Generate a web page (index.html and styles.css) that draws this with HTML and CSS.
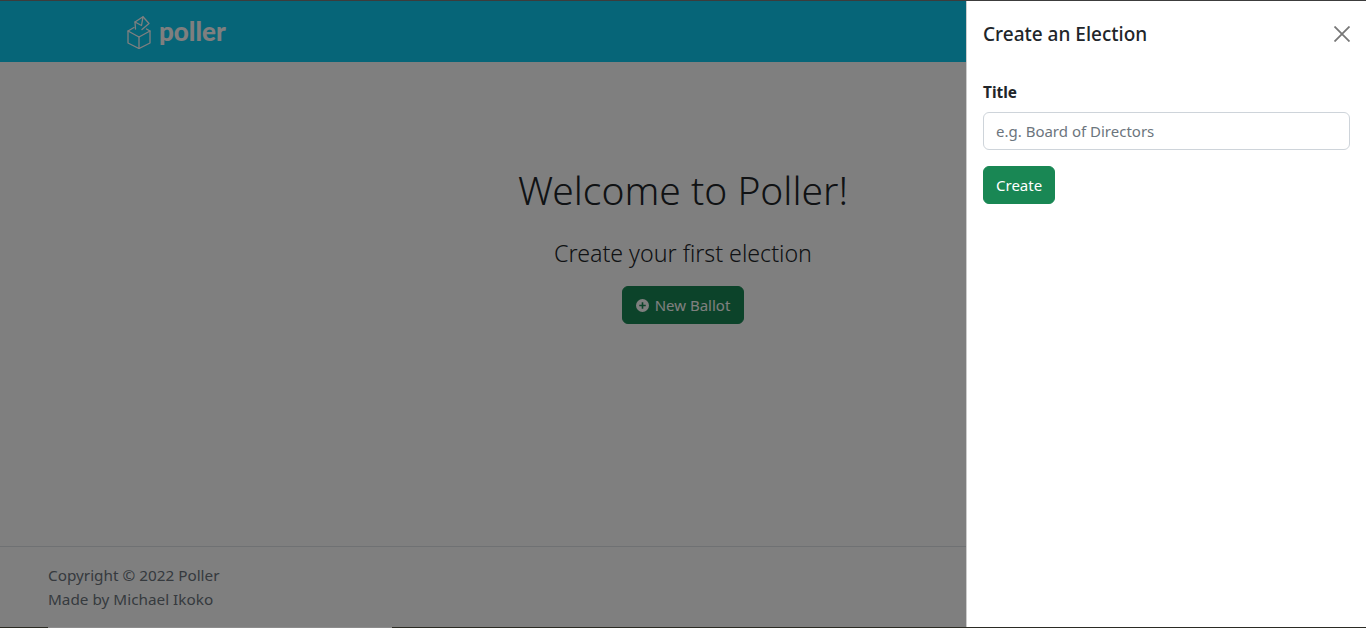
FILE: index.html
```html
<!DOCTYPE html>
<html lang="en">

<head>
    <meta charset="UTF-8">
    <meta name="viewport" content="width=device-width, initial-scale=1.0">
    <title>Poller</title>
    <link rel="stylesheet" href="styles.css">
</head>

<body>
    <header class="navbar">
        <a class="brand" href="#">
            <svg class="brand_icon" viewBox="0 0 24 33" fill="none" stroke="currentColor" stroke-width="1.3" stroke-linejoin="round" stroke-linecap="round">
                <path d="M7 11.5 L1 15 V27 L12 32.5 L23 27 V15 L19.5 13"/>
                <path d="M1 15 L12 21 L23 15"/>
                <path d="M12 21 V32.5"/>
                <path d="M8.5 13 L8 6 L16 0.8 L22 7.5 L15 13.5"/>
                <path d="M8 6 L14.5 9.5 L16 0.8"/>
            </svg>
            <span class="brand_name">poller</span>
        </a>
    </header>

    <main class="content">
        <h1 class="welcome">Welcome to Poller!</h1>
        <p class="lead">Create your first election</p>
        <button class="btn btn_new" type="button">
            <svg class="plus_icon" viewBox="0 0 16 16" fill="currentColor">
                <path fill-rule="evenodd" d="M8 0a8 8 0 1 1 0 16A8 8 0 0 1 8 0zM7 4v3H4v2h3v3h2V9h3V7H9V4z"/>
            </svg>
            New Ballot
        </button>
    </main>

    <footer class="footer">
        <p>Copyright © 2022 Poller</p>
        <p>Made by Michael Ikoko</p>
    </footer>

    <div class="backdrop"></div>

    <aside class="offcanvas">
        <div class="offcanvas_header">
            <h5 class="offcanvas_title">Create an Election</h5>
            <svg class="close_icon" viewBox="0 0 16 16" fill="none" stroke="currentColor" stroke-width="1.8">
                <path d="M0.5 0.5 L15.5 15.5 M15.5 0.5 L0.5 15.5"/>
            </svg>
        </div>
        <form class="offcanvas_body">
            <label class="label" for="title">Title</label>
            <input class="input" id="title" type="text" placeholder="e.g. Board of Directors">
            <button class="btn btn_create" type="button">Create</button>
        </form>
    </aside>

    <!-- window edges, they lie over the whole page -->
    <div class="edge_top"></div>
    <div class="edge_bottom">
        <span class="edge_gap"></span>
    </div>
</body>

</html>
```

FILE: styles.css
```css
* {
    margin: 0;
    padding: 0;
    box-sizing: border-box;
}
html, body {
    height: 100%;
}
body {
    font-family: "Noto Sans", "Open Sans", sans-serif;
    font-size: 16px;
    line-height: 24px;
    color: #212529;
    background-color: #fff;
    display: flex;
    flex-direction: column;
    overflow: hidden;
}
.navbar {
    height: 62px;
    flex: none;
    background-color: #0dcaf0;
    padding-left: 127px;
    display: flex;
    align-items: center;
}
.brand {
    display: flex;
    align-items: center;
    gap: 8px;
    color: #fff;
    text-decoration: none;
}
.brand_icon {
    width: 24px;
    height: 33px;
    margin-top: 3px;
}
.brand_name {
    font-family: "Lato", sans-serif;
    font-size: 26px;
    font-weight: 900;
    line-height: 30px;
}
.content {
    flex: 1;
    text-align: center;
    padding-top: 101px;
}
.welcome {
    font-size: 39px;
    font-weight: 350;
    line-height: 53px;
    margin-bottom: 22px;
}
.lead {
    font-size: 23.2px;
    font-weight: 300;
    line-height: 30px;
    margin-bottom: 18px;
}
.btn {
    font-family: inherit;
    font-size: 15px;
    line-height: 24px;
    height: 38px;
    padding: 6px 12px;
    color: #fff;
    background-color: #198754;
    border: 1px solid #198754;
    border-radius: 6px;
}
.btn_new {
    display: inline-flex;
    align-items: center;
    gap: 6px;
    padding: 6px 13px;
}
.plus_icon {
    width: 13px;
    height: 13px;
}
.footer {
    flex: none;
    height: 82px;
    border-top: 1px solid #dee2e6;
    padding: 16px 48px;
    color: #6c757d;
    font-size: 15.3px;
}
.backdrop {
    position: fixed;
    inset: 0;
    background-color: rgba(0, 0, 0, 0.5);
}
.offcanvas {
    position: fixed;
    top: 0;
    right: 0;
    bottom: 0;
    width: 400px;
    background-color: #fff;
    border-left: 1px solid rgba(0, 0, 0, 0.2);
}
.offcanvas_header {
    display: flex;
    justify-content: space-between;
    align-items: center;
    padding: 17px 16px 15px;
    height: 66px;
}
.offcanvas_title {
    font-size: 19px;
    font-weight: 500;
    line-height: 24px;
}
.close_icon {
    width: 16px;
    height: 16px;
    color: #777;
}
.offcanvas_body {
    padding: 15px 16px;
}
.label {
    display: block;
    font-size: 15.4px;
    font-weight: 700;
    line-height: 24px;
    margin-bottom: 7px;
}
.input {
    display: block;
    width: 100%;
    height: 38px;
    padding: 6px 12px;
    font-family: inherit;
    font-size: 15px;
    border: 1px solid #ced4da;
    border-radius: 6px;
    margin-bottom: 16px;
}
.input::placeholder {
    color: #6c757d;
}
.edge_top {
    position: fixed;
    top: 0;
    left: 0;
    right: 0;
    height: 1px;
    background-color: #3c3c3c;
}
.edge_bottom {
    position: fixed;
    bottom: 0;
    left: 0;
    right: 0;
    height: 1px;
    background-color: #2b2b24;
    padding-left: 48px;
}
.edge_gap {
    display: block;
    width: 344px;
    height: 1px;
    background-color: #8c8c8c;
}
```
